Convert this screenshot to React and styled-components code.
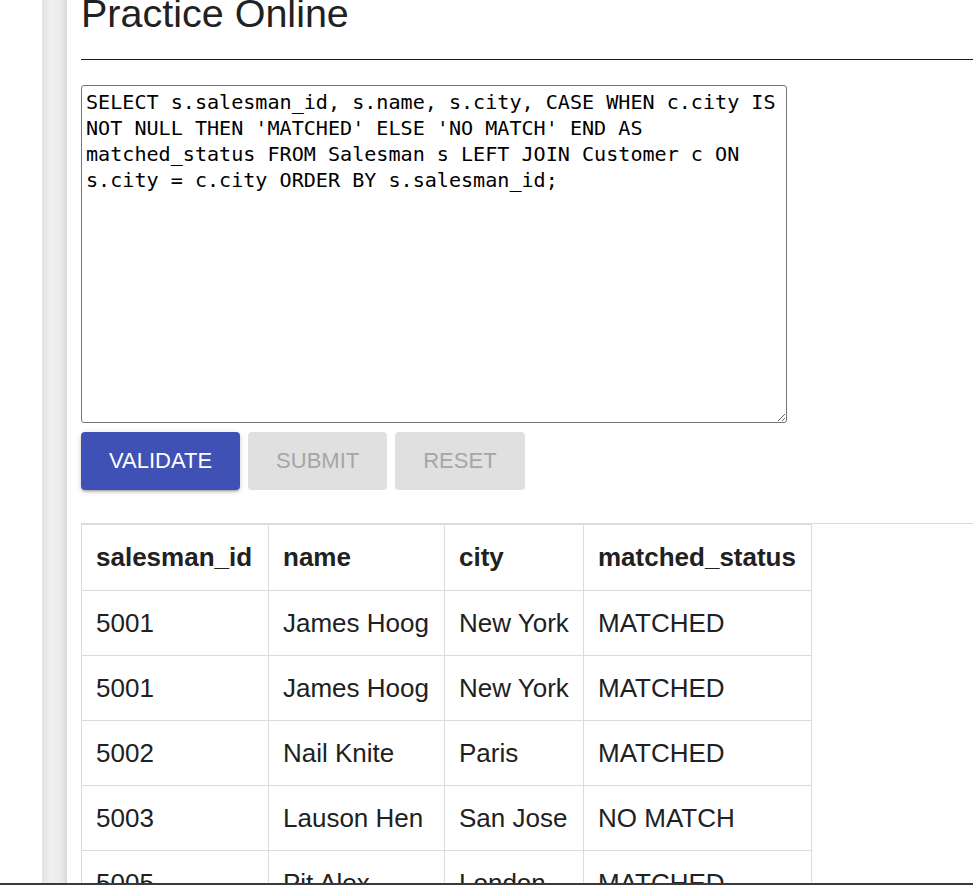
import { useState } from "react";
import styled, { createGlobalStyle } from "styled-components";

const GlobalStyle = createGlobalStyle`
  html, body {
    margin: 0;
    padding: 0;
    background: #fff;
  }
  body {
    font-family: "Liberation Sans", Arial, sans-serif;
    color: #212121;
  }
`;

const Frame = styled.div`
  height: 885px;
  display: flex;
  flex-direction: column;
  overflow: hidden;
`;

const Body = styled.div`
  flex: 1;
  min-height: 0;
  display: flex;
  overflow: hidden;
`;

const Gutter = styled.div`
  width: 42px;
  flex-shrink: 0;
`;

const SideBar = styled.div`
  width: 25px;
  flex-shrink: 0;
  background: linear-gradient(
    to right,
    #e4e4e4 0%,
    #efefef 35%,
    #ececec 70%,
    #dadada 100%
  );
`;

const Main = styled.main`
  flex: 1;
  min-width: 0;
  padding-left: 14px;
  overflow: hidden;
`;

const Title = styled.h1`
  margin: -11px 0 0;
  font-size: 39.5px;
  line-height: 48px;
  font-weight: 400;
  color: #212121;
`;

const Rule = styled.hr`
  margin: 22px 0 0;
  border: 0;
  border-top: 1px solid #1a1a1a;
  height: 0;
`;

const Editor = styled.textarea`
  display: block;
  box-sizing: border-box;
  width: 706px;
  height: 338px;
  margin: 25px 0 9px;
  padding: 3px 4px;
  border: 1px solid #767676;
  border-radius: 3px;
  font-family: "DejaVu Sans Mono", "Liberation Mono", monospace;
  font-size: 20.1px;
  line-height: 26px;
  color: #000;
  background: #fff;
  resize: both;
  outline: none;
`;

const Actions = styled.div`
  display: flex;
  gap: 8px;
`;

const Button = styled.button`
  height: 58px;
  padding: 0 28px;
  border: 0;
  border-radius: 4px;
  font-family: "Liberation Sans", Arial, sans-serif;
  font-size: 22px;
  font-weight: 400;
  text-transform: uppercase;
  cursor: ${(p) => (p.disabled ? "default" : "pointer")};
  background: ${(p) => (p.$primary ? "#3f51b5" : "#e0e0e0")};
  color: ${(p) => (p.$primary ? "#fff" : "#a6a6a6")};
  box-shadow: ${(p) =>
    p.$primary
      ? "0 3px 2px -2px rgba(0,0,0,0.2), 0 2px 3px 0 rgba(0,0,0,0.14), 0 1px 7px 0 rgba(0,0,0,0.12)"
      : "none"};
`;

const ResultWrap = styled.div`
  margin-top: 33px;
  border-top: 1px solid #dcdcdc;
`;

const Table = styled.table`
  border-collapse: collapse;
  table-layout: fixed;
  width: 730px;
  font-size: 26px;
  color: #212121;
`;

const HeadCell = styled.th`
  height: 65px;
  padding: 0 10px 0 14px;
  border: 1px solid #dcdcdc;
  text-align: left;
  font-weight: 700;
  white-space: nowrap;
`;

const Cell = styled.td`
  height: 64px;
  padding: 0 10px 0 14px;
  border: 1px solid #dcdcdc;
  font-weight: 400;
  white-space: nowrap;
`;

const BottomBar = styled.div`
  height: 2px;
  flex-shrink: 0;
  background: #3a3a3a;
`;

const QUERY =
  "SELECT s.salesman_id, s.name, s.city, CASE WHEN c.city IS NOT NULL THEN 'MATCHED' ELSE 'NO MATCH' END AS matched_status FROM Salesman s LEFT JOIN Customer c ON s.city = c.city ORDER BY s.salesman_id;";

const columns = [
  { key: "salesman_id", width: 187 },
  { key: "name", width: 176 },
  { key: "city", width: 139 },
  { key: "matched_status", width: 228 },
];

const rows = [
  ["5001", "James Hoog", "New York", "MATCHED"],
  ["5001", "James Hoog", "New York", "MATCHED"],
  ["5002", "Nail Knite", "Paris", "MATCHED"],
  ["5003", "Lauson Hen", "San Jose", "NO MATCH"],
  ["5005", "Pit Alex", "London", "MATCHED"],
  ["5006", "Mc Lyon", "Paris", "MATCHED"],
  ["5007", "Paul Adam", "Rome", "NO MATCH"],
];

export default function App() {
  const [query, setQuery] = useState(QUERY);

  return (
    <>
      <GlobalStyle />
      <Frame>
        <Body>
          <Gutter />
          <SideBar />
          <Main>
            <Title>Practice Online</Title>
            <Rule />
            <Editor
              value={query}
              spellCheck={false}
              onChange={(e) => setQuery(e.target.value)}
            />
            <Actions>
              <Button $primary>Validate</Button>
              <Button disabled>Submit</Button>
              <Button disabled>Reset</Button>
            </Actions>
            <ResultWrap>
              <Table>
                <colgroup>
                  {columns.map((col) => (
                    <col key={col.key} style={{ width: col.width }} />
                  ))}
                </colgroup>
                <thead>
                  <tr>
                    {columns.map((col) => (
                      <HeadCell key={col.key}>{col.key}</HeadCell>
                    ))}
                  </tr>
                </thead>
                <tbody>
                  {rows.map((row, i) => (
                    <tr key={i}>
                      {row.map((value, j) => (
                        <Cell key={j}>{value}</Cell>
                      ))}
                    </tr>
                  ))}
                </tbody>
              </Table>
            </ResultWrap>
          </Main>
        </Body>
        <BottomBar />
      </Frame>
    </>
  );
}
